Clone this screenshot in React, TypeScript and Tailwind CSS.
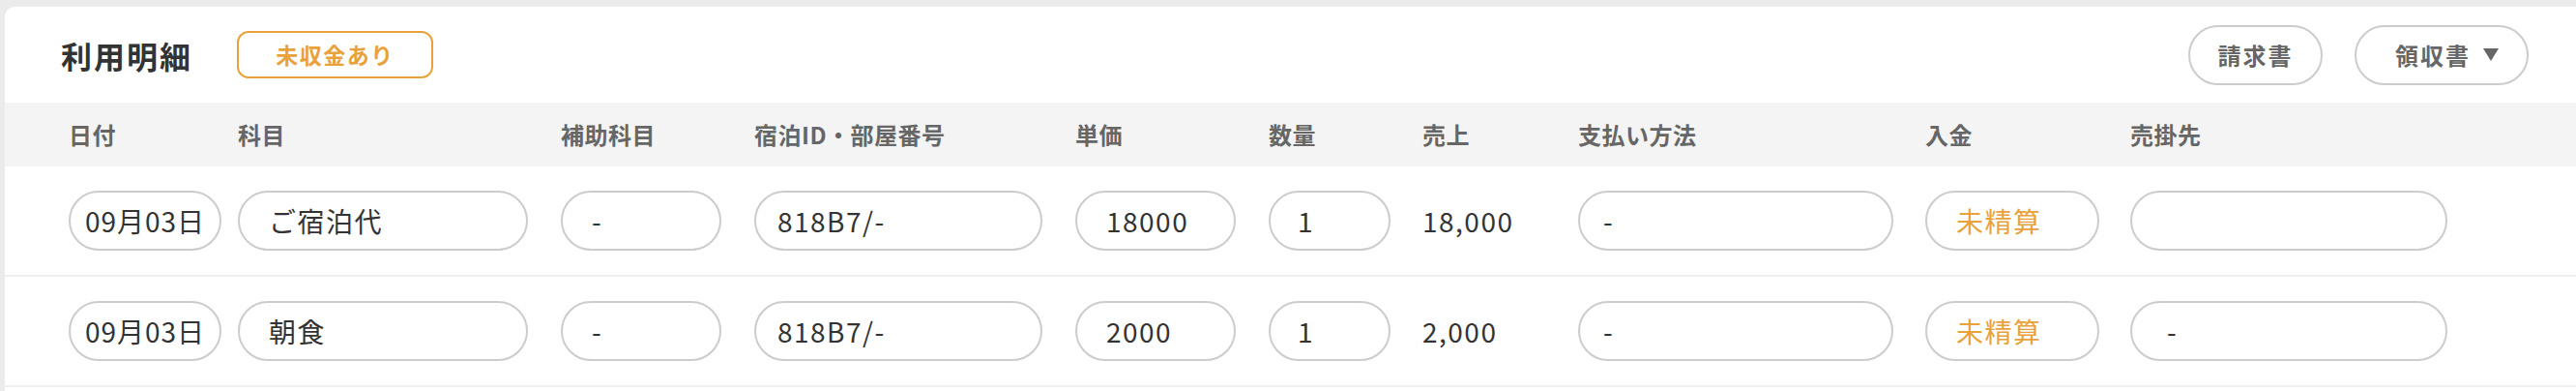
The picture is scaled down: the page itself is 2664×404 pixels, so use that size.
import React from "react";

const FONT = { fontFamily: '"Noto Sans CJK JP", "Noto Sans", sans-serif' };

type Row = {
  date: string;
  item: string;
  sub: string;
  room: string;
  price: string;
  qty: string;
  sales: string;
  pay: string;
  status: string;
  ar: string;
};

const rows: Row[] = [
  { date: "09月03日", item: "ご宿泊代", sub: "-", room: "818B7/-", price: "18000", qty: "1", sales: "18,000", pay: "-", status: "未精算", ar: "" },
  { date: "09月03日", item: "朝食", sub: "-", room: "818B7/-", price: "2000", qty: "1", sales: "2,000", pay: "-", status: "未精算", ar: "-" },
];

function Pill({ w, pl, children, className = "" }: { w: string; pl: string; children?: React.ReactNode; className?: string }) {
  return (
    <div className={`${w} ${pl} h-[62px] rounded-full border-2 border-[#cccccc] bg-white flex items-center text-[28px] tracking-[1.5px] text-[#333] ${className}`}>
      {children}
    </div>
  );
}

export default function App() {
  return (
    <div className="w-[2664px] h-[404px] bg-[#ebebeb] pt-[7px] pl-[5px] overflow-hidden" style={FONT}>
      <div className="bg-white rounded-tl-[10px] h-full">
        {/* Top header */}
        <div className="flex items-center h-[99px] pl-[58px] pr-[49px]">
          <h1 className="text-[32px] font-bold text-[#333] tracking-[2px] leading-none">利用明細</h1>
          <div className="ml-[46px] w-[203px] h-[49px] rounded-[12px] border-[2.5px] border-[#e9a23b] flex items-center justify-center text-[23px] font-bold text-[#e9a23b] tracking-[1.5px]">
            未収金あり
          </div>
          <div className="ml-auto flex items-center gap-[33px]">
            <button className="h-[62px] w-[139px] rounded-full border-2 border-[#cccccc] flex items-center justify-center text-[24px] font-bold text-[#666] tracking-[2px]">
              請求書
            </button>
            <button className="h-[62px] w-[180px] rounded-full border-2 border-[#cccccc] flex items-center pl-[40px] text-[24px] font-bold text-[#666] tracking-[2px]">
              <span>領収書</span>
              <svg className="ml-[13px]" width="16" height="13" viewBox="0 0 16 13">
                <polygon points="0,0 16,0 8,13" fill="#666" />
              </svg>
            </button>
          </div>
        </div>

        {/* Column header */}
        <div className="flex items-center h-[66px] bg-[#f4f4f4] pl-[66px] text-[24px] font-bold text-[#666] tracking-[0.5px]">
          <div className="w-[175px] shrink-0">日付</div>
          <div className="w-[334px] shrink-0">科目</div>
          <div className="w-[200px] shrink-0">補助科目</div>
          <div className="w-[332px] shrink-0">宿泊ID・部屋番号</div>
          <div className="w-[200px] shrink-0">単価</div>
          <div className="w-[159px] shrink-0">数量</div>
          <div className="w-[161px] shrink-0">売上</div>
          <div className="w-[359px] shrink-0">支払い方法</div>
          <div className="w-[212px] shrink-0">入金</div>
          <div className="shrink-0">売掛先</div>
        </div>

        {/* Rows */}
        {rows.map((r, i) => (
          <div key={i} className="flex items-center h-[114px] border-b-2 border-[#f0f0f0] pl-[66px]">
            <div className="w-[175px] shrink-0">
              <Pill w="w-[158px]" pl="justify-center tracking-[1px]">{r.date}</Pill>
            </div>
            <div className="w-[334px] shrink-0">
              <Pill w="w-[300px]" pl="pl-[30px]">{r.item}</Pill>
            </div>
            <div className="w-[200px] shrink-0">
              <Pill w="w-[166px]" pl="pl-[30px]">{r.sub}</Pill>
            </div>
            <div className="w-[332px] shrink-0">
              <Pill w="w-[298px]" pl="pl-[22px]">{r.room}</Pill>
            </div>
            <div className="w-[200px] shrink-0">
              <Pill w="w-[166px]" pl="pl-[30px]">{r.price}</Pill>
            </div>
            <div className="w-[159px] shrink-0">
              <Pill w="w-[126px]" pl="pl-[28px]">{r.qty}</Pill>
            </div>
            <div className="w-[161px] shrink-0 text-[28px] tracking-[1.5px] text-[#333]">{r.sales}</div>
            <div className="w-[359px] shrink-0">
              <Pill w="w-[326px]" pl="pl-[24px]">{r.pay}</Pill>
            </div>
            <div className="w-[212px] shrink-0">
              <Pill w="w-[180px]" pl="pl-[30px]" className="!text-[#e9a23b]">{r.status}</Pill>
            </div>
            <div className="shrink-0">
              <Pill w="w-[328px]" pl="pl-[36px]">{r.ar}</Pill>
            </div>
          </div>
        ))}
      </div>
    </div>
  );
}
